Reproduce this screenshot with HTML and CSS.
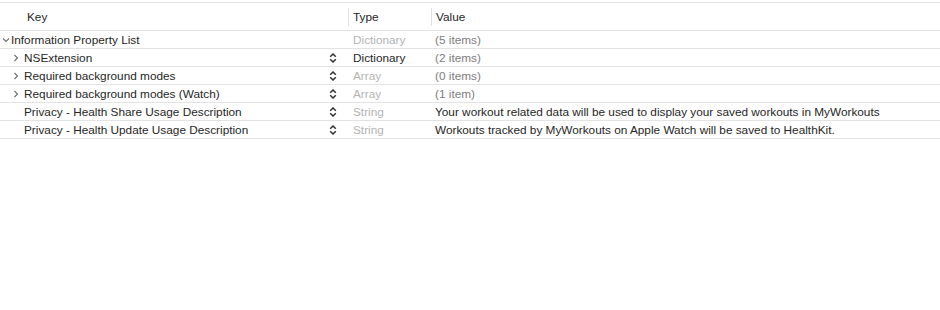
FILE: index.html
```html
<!DOCTYPE html>
<html lang="en">
<head>
    <meta charset="UTF-8">
    <title>Info.plist</title>
    <link rel="stylesheet" href="styles.css">
</head>
<body>
<div class="plist">
    <div class="head">
        <div class="cell key">Key</div>
        <div class="cell type">Type</div>
        <div class="cell value">Value</div>
    </div>

    <div class="row">
        <div class="cell key root">
            <svg class="disclosure" width="8" height="8" viewBox="0 0 8 8"><path d="M1 2.5 L4 5.5 L7 2.5" /></svg>
            Information Property List
        </div>
        <div class="cell type dim">Dictionary</div>
        <div class="cell value muted">(5 items)</div>
    </div>

    <div class="row">
        <div class="cell key child">
            <svg class="disclosure" width="8" height="8" viewBox="0 0 8 8"><path d="M2.5 1 L5.5 4 L2.5 7" /></svg>
            <span class="name">NSExtension</span>
            <svg class="stepper" width="8" height="10" viewBox="0 0 8 10"><path d="M1.2 3.8 L4 1 L6.8 3.8 M1.2 6.2 L4 9 L6.8 6.2" /></svg>
        </div>
        <div class="cell type">Dictionary</div>
        <div class="cell value muted">(2 items)</div>
    </div>

    <div class="row">
        <div class="cell key child">
            <svg class="disclosure" width="8" height="8" viewBox="0 0 8 8"><path d="M2.5 1 L5.5 4 L2.5 7" /></svg>
            <span class="name">Required background modes</span>
            <svg class="stepper" width="8" height="10" viewBox="0 0 8 10"><path d="M1.2 3.8 L4 1 L6.8 3.8 M1.2 6.2 L4 9 L6.8 6.2" /></svg>
        </div>
        <div class="cell type dim">Array</div>
        <div class="cell value muted">(0 items)</div>
    </div>

    <div class="row">
        <div class="cell key child">
            <svg class="disclosure" width="8" height="8" viewBox="0 0 8 8"><path d="M2.5 1 L5.5 4 L2.5 7" /></svg>
            <span class="name">Required background modes (Watch)</span>
            <svg class="stepper" width="8" height="10" viewBox="0 0 8 10"><path d="M1.2 3.8 L4 1 L6.8 3.8 M1.2 6.2 L4 9 L6.8 6.2" /></svg>
        </div>
        <div class="cell type dim">Array</div>
        <div class="cell value muted">(1 item)</div>
    </div>

    <div class="row">
        <div class="cell key child leaf">
            <span class="name">Privacy - Health Share Usage Description</span>
            <svg class="stepper" width="8" height="10" viewBox="0 0 8 10"><path d="M1.2 3.8 L4 1 L6.8 3.8 M1.2 6.2 L4 9 L6.8 6.2" /></svg>
        </div>
        <div class="cell type dim">String</div>
        <div class="cell value">Your workout related data will be used to display your saved workouts in MyWorkouts</div>
    </div>

    <div class="row">
        <div class="cell key child leaf">
            <span class="name">Privacy - Health Update Usage Description</span>
            <svg class="stepper" width="8" height="10" viewBox="0 0 8 10"><path d="M1.2 3.8 L4 1 L6.8 3.8 M1.2 6.2 L4 9 L6.8 6.2" /></svg>
        </div>
        <div class="cell type dim">String</div>
        <div class="cell value">Workouts tracked by MyWorkouts on Apple Watch will be saved to HealthKit.</div>
    </div>
</div>
</body>
</html>
```

FILE: styles.css
```css
* {
    margin: 0;
    padding: 0;
    box-sizing: border-box;
}

body {
    font-family: "Liberation Sans", Arial, sans-serif;
    font-size: 11.8px;
    color: #262626;
    background: #fff;
    padding-top: 2px;
}

.plist {
    width: 940px;
    border-top: 1px solid #e3e3e3;
}

.head,
.row {
    display: grid;
    grid-template-columns: 348px 83px 1fr;
    border-bottom: 1px solid #e3e3e3;
}

.head {
    height: 28px;
    align-items: center;
}

.head .cell {
    height: 18px;
    display: flex;
    align-items: center;
}

.head .key {
    padding-left: 27px;
}

.head .type,
.head .value {
    border-left: 1px solid #e0e0e0;
    padding-left: 4px;
}

.row {
    height: 18px;
    align-items: center;
}

.cell {
    white-space: nowrap;
    overflow: hidden;
}

.row .type {
    padding-left: 5px;
}

.row .value {
    padding-left: 4px;
}

.key {
    display: flex;
    align-items: center;
}

.root {
    padding-left: 2px;
}

.root .disclosure {
    margin-right: 1px;
}

.child {
    padding-left: 12px;
}

.child.leaf {
    padding-left: 24px;
}

.child .disclosure {
    margin-right: 4px;
}

.child .name {
    flex: 1;
}

.disclosure path {
    fill: none;
    stroke: #6e6e6e;
    stroke-width: 1.1;
}

.stepper {
    margin-right: 11px;
}

.stepper path {
    fill: none;
    stroke: #333;
    stroke-width: 1.5;
}

.dim {
    color: #b4b4b4;
}

.muted {
    color: #7d7d7d;
}
```
